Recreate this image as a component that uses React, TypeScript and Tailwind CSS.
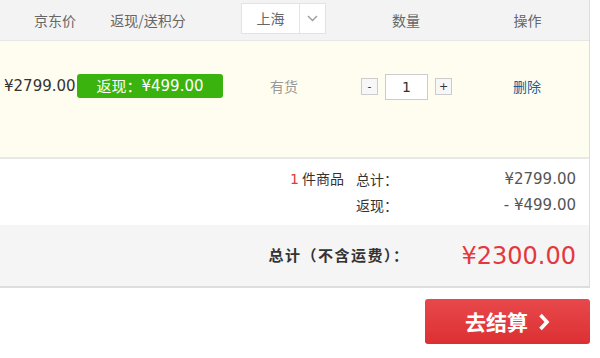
import React from "react";

const cjk = { fontFamily: '"Noto Sans CJK SC", "Noto Sans", sans-serif' } as const;
const num = { fontFamily: '"DejaVu Sans", "Noto Sans CJK SC", sans-serif' } as const;

export default function App() {
  return (
    <div className="w-[600px] h-[358px] bg-white text-[#333] overflow-hidden" style={cjk}>
      <div className="w-[590px] border-r border-[#dddddd]">
        {/* header */}
        <div className="h-[41px] bg-[#f3f3f3] border-b border-[#e6e6e6] flex items-center text-[14px] text-[#666]">
          <div className="w-[110px] text-center">京东价</div>
          <div className="w-[76px] text-center">返现/送积分</div>
          <div className="ml-[55px] w-[85px] h-[31px] mt-[-3px] bg-white border border-[#e3e3e3] flex">
            <div className="w-[57px] flex items-center justify-center text-[#666]">上海</div>
            <div className="flex-1 border-l border-[#e3e3e3] flex items-center justify-center">
              <svg width="11" height="7" viewBox="0 0 11 7">
                <path d="M1 1 L5.5 5.5 L10 1" fill="none" stroke="#999" strokeWidth="1.3" />
              </svg>
            </div>
          </div>
          <div className="w-[160px] text-center">数量</div>
          <div className="w-[83px] text-center">操作</div>
        </div>
        {/* item row */}
        <div className="h-[118px] bg-[#fffdef] border-b-2 border-[#e8e8e8] pt-[31px]">
          <div className="h-[28px] flex items-center">
            <div className="pl-[4px] w-[77px] text-[15px] text-[#333]" style={num}>¥2799.00</div>
            <div className="w-[146px] h-[24px] rounded-[3px] bg-[#3bb30e] text-white text-[15px] flex items-center justify-center">
              <span style={cjk}>返现：</span>
              <span style={num}>¥499.00</span>
            </div>
            <div className="w-[122px] text-center text-[14px] text-[#999]">有货</div>
            <div className="ml-[16px] flex items-center">
              <div className="w-[17px] h-[17px] border border-[#cccccc] bg-[#f7f7f7] flex items-center justify-center text-[11px] text-[#333] leading-none" style={num}>-</div>
              <div className="ml-[7px] w-[43px] h-[26px] border border-[#cccccc] bg-white flex items-center justify-center text-[14px] text-[#333] mt-[2px]" style={num}>1</div>
              <div className="ml-[7px] w-[17px] h-[17px] border border-[#cccccc] bg-[#f7f7f7] flex items-center justify-center text-[11px] text-[#333] leading-none" style={num}>+</div>
            </div>
            <div className="ml-[61px] text-[14px] text-[#1a5d99]">删除</div>
          </div>
        </div>
        {/* summary */}
        <div className="h-[66px] bg-white flex flex-col justify-center pr-[13px] text-[14px]">
          <div className="flex items-center justify-end h-[26px]">
            <span className="text-[#333]"><span className="text-[#e4393c]" style={num}>1</span> 件商品</span>
            <span className="ml-[12px] w-[60px]">总计：</span>
            <span className="w-[160px] text-right text-[15px] text-[#555]" style={num}>¥2799.00</span>
          </div>
          <div className="flex items-center justify-end h-[26px]">
            <span className="w-[60px]">返现：</span>
            <span className="w-[160px] text-right text-[15px] text-[#555]" style={num}>- ¥499.00</span>
          </div>
        </div>
        {/* total */}
        <div className="h-[63px] bg-[#f5f5f5] border-b-2 border-[#dddddd] flex items-center justify-end pr-[13px]">
          <span className="text-[15px] font-bold text-[#333] tracking-[1.5px]">总计（不含运费）：</span>
          <span className="ml-[52px] text-[24px] text-[#e4393c]" style={num}>¥2300.00</span>
        </div>
      </div>
      <div className="w-[590px] flex justify-end mt-[11px]">
        <div className="w-[165px] h-[45px] rounded-[3px] bg-gradient-to-b from-[#e8484b] to-[#dc2f33] flex items-center justify-center text-white text-[21px] font-bold">
          <span>去结算</span>
          <svg className="ml-[10px]" width="12" height="18" viewBox="0 0 12 18">
            <path d="M2.5 2 L9 9 L2.5 16" fill="none" stroke="white" strokeWidth="3.6" />
          </svg>
        </div>
      </div>
    </div>
  );
}
